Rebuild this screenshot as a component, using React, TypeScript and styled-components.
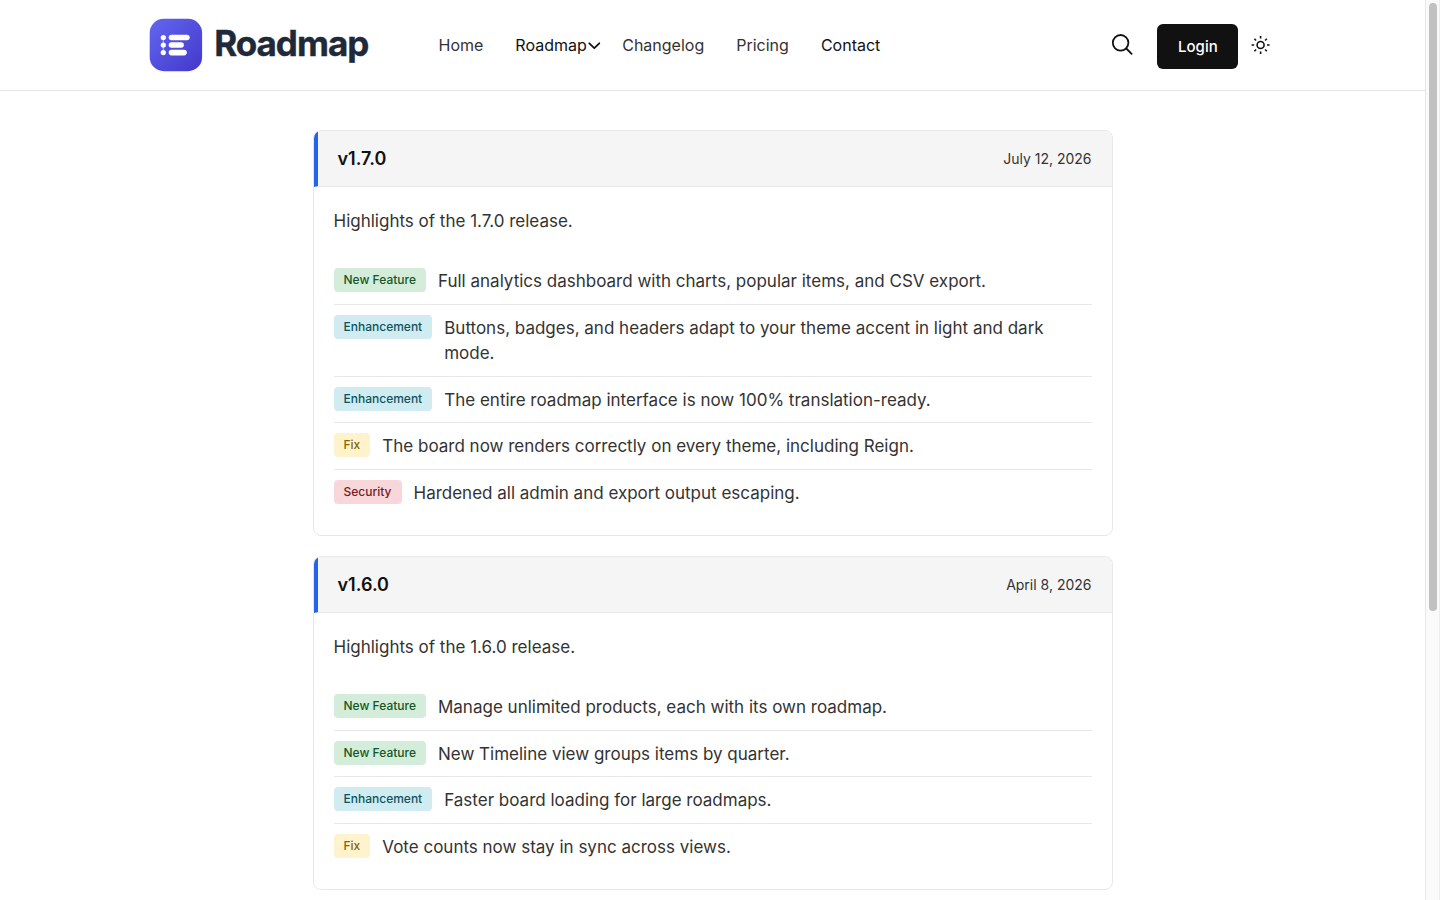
import React from "react";
import styled, { createGlobalStyle } from "styled-components";

const GlobalStyle = createGlobalStyle`
  *, *::before, *::after { box-sizing: border-box; }
  body {
    margin: 0;
    height: 900px;
    overflow: hidden;
    background: #fff;
    color: #333;
    font-family: Inter, "Liberation Sans", sans-serif;
    font-size: 17px;
    line-height: 1.5;
    -webkit-font-smoothing: antialiased;
  }
  h2, p, ul { margin: 0; padding: 0; }
  a { color: inherit; text-decoration: none; }
`;

const Shell = styled.div`
  display: flex;
  height: 900px;
  overflow: hidden;
`;

const Page = styled.div`
  flex: 1;
  min-width: 0;
`;

const ScrollTrack = styled.div`
  width: 15px;
  height: 900px;
  padding: 3px 2px 0 3px;
  background: #fafafa;
  border-left: 1px solid #e8e8e8;
  border-right: 1px solid #ededed;
`;

const ScrollThumb = styled.div`
  width: 8px;
  height: 608px;
  border-radius: 4px;
  background: #c1c1c1;
`;

const Header = styled.header`
  display: flex;
  align-items: center;
  height: 91px;
  padding: 0 154.6px 1px 149px;
  border-bottom: 1px solid #e8e8ec;
`;

const Brand = styled.a`
  display: flex;
  align-items: center;
  width: 289.5px;
  gap: 11.2px;
`;

const BrandName = styled.span`
  color: #1f2937;
  font-size: 35px;
  font-weight: 700;
  line-height: 44px;
  letter-spacing: -1px;
  -webkit-text-stroke: 0.4px #1f2937;
  margin-top: -4px;
`;

const Nav = styled.nav`
  display: flex;
  align-items: center;
  flex: 1;
  font-size: 16px;
  line-height: 24px;
`;

const NavLink = styled.a<{ $strong?: boolean; $gap?: number }>`
  display: flex;
  align-items: center;
  margin-right: ${(p) => p.$gap ?? 32}px;
  color: ${(p) => (p.$strong ? "#111" : "#333")};
  white-space: nowrap;
`;

const Actions = styled.div`
  display: flex;
  align-items: center;
`;

const LoginButton = styled.button`
  width: 81px;
  height: 45px;
  margin: 4px 12px 0 24px;
  padding: 1px 0 0;
  border: 0;
  border-radius: 6px;
  background: #111;
  color: #fff;
  font: 500 15px/24px Inter, sans-serif;
`;

const Releases = styled.main`
  display: flex;
  flex-direction: column;
  gap: 20px;
  width: 800px;
  margin: 39px auto 0;
`;

const Card = styled.article`
  border: 1px solid #e8e8e8;
  border-radius: 8px;
  overflow: hidden;
`;

const CardHeader = styled.div`
  display: flex;
  align-items: center;
  justify-content: space-between;
  height: 56px;
  padding: 0 20px;
  border-left: 4px solid #2563eb;
  border-bottom: 1px solid #e8e8e8;
  background: #f5f5f5;
`;

const Version = styled.h2`
  color: #111;
  font-size: 18px;
  font-weight: 600;
  line-height: 27px;
`;

const ReleaseDate = styled.time`
  font-size: 14px;
  line-height: 21px;
`;

const CardBody = styled.div`
  padding: 20px;
`;

const Summary = styled.p`
  line-height: 28px;
  margin-bottom: 23px;
`;

const Changes = styled.ul`
  list-style: none;
`;

const Change = styled.li`
  display: flex;
  align-items: flex-start;
  gap: 12px;
  padding: 10px 0;
  border-bottom: 1px solid #e8e8e8;
  &:last-child { border-bottom: 0; }
`;

const ChangeText = styled.span`
  margin: 1px 0 -1px;
`;

const tones = {
  "New Feature": ["#d4edda", "#155724"],
  Enhancement: ["#d1ecf1", "#0c5460"],
  Fix: ["#fff3cd", "#856404"],
  Security: ["#f8d7da", "#721c24"],
} as const;
type Kind = keyof typeof tones;

const Badge = styled.span<{ $kind: Kind }>`
  flex: none;
  padding: 3px 10px;
  border-radius: 4px;
  background: ${(p) => tones[p.$kind][0]};
  color: ${(p) => tones[p.$kind][1]};
  font-size: 12px;
  font-weight: 500;
  line-height: 18px;
`;

const releases: { version: string; date: string; changes: [Kind, string][] }[] = [
  {
    version: "1.7.0",
    date: "July 12, 2026",
    changes: [
      ["New Feature", "Full analytics dashboard with charts, popular items, and CSV export."],
      ["Enhancement", "Buttons, badges, and headers adapt to your theme accent in light and dark mode."],
      ["Enhancement", "The entire roadmap interface is now 100% translation-ready."],
      ["Fix", "The board now renders correctly on every theme, including Reign."],
      ["Security", "Hardened all admin and export output escaping."],
    ],
  },
  {
    version: "1.6.0",
    date: "April 8, 2026",
    changes: [
      ["New Feature", "Manage unlimited products, each with its own roadmap."],
      ["New Feature", "New Timeline view groups items by quarter."],
      ["Enhancement", "Faster board loading for large roadmaps."],
      ["Fix", "Vote counts now stay in sync across views."],
    ],
  },
];

const Logo = () => (
  <svg width="54" height="54" viewBox="0 0 54 54">
    <defs>
      <linearGradient id="brand" x1="0" y1="0" x2="1" y2="1">
        <stop offset="0" stopColor="#6366f1" />
        <stop offset="1" stopColor="#4338ca" />
      </linearGradient>
    </defs>
    <rect x="0.7" y="0.8" width="52.4" height="52.4" rx="14" fill="url(#brand)" />
    <path d="M14.3 20v15" stroke="#fff" strokeOpacity="0.5" strokeWidth="1.2" />
    <g fill="#fff">
      <circle cx="14.3" cy="19.5" r="2.6" />
      <circle cx="14.3" cy="27" r="2.6" />
      <circle cx="14.3" cy="34.6" r="2.6" />
      <rect x="19.7" y="16.7" width="21" height="5.6" rx="2.8" />
      <rect x="19.7" y="24.2" width="15.2" height="5.6" rx="2.8" />
      <rect x="19.7" y="31.8" width="18.1" height="5.6" rx="2.8" />
    </g>
  </svg>
);

const Chevron = () => (
  <svg width="14" height="14" viewBox="0 0 14 14" fill="none" stroke="#111" strokeWidth="1.8" strokeLinecap="round" strokeLinejoin="round">
    <path d="M2.3 5.3 7.3 10.1 12.3 5.3" />
  </svg>
);

const SearchIcon = () => (
  <svg width="22" height="22" viewBox="0 0 22 22" fill="none" stroke="#111" strokeWidth="1.8" strokeLinecap="round">
    <circle cx="9.6" cy="8.8" r="7.8" />
    <path d="m15.3 14.5 5.3 5.3" />
  </svg>
);

const SunIcon = () => (
  <svg width="20" height="20" viewBox="0 0 20 20" fill="none" stroke="#111" strokeWidth="1.6">
    <circle cx="10.6" cy="10" r="3.5" />
    <path d="M10.6 1v2.6M10.6 16.4V19M1.6 10h2.6M17 10h2.6M4.4 3.8l1.7 1.7M15.1 14.5l1.7 1.7M4.4 16.2l1.7-1.7M15.1 5.5l1.7-1.7" />
  </svg>
);

export default function App() {
  return (
    <Shell>
      <GlobalStyle />
      <Page>
        <Header>
          <Brand href="#">
            <Logo />
            <BrandName>Roadmap</BrandName>
          </Brand>
          <Nav>
            <NavLink href="#">Home</NavLink>
            <NavLink href="#" $strong $gap={21.5}>Roadmap<Chevron /></NavLink>
            <NavLink href="#">Changelog</NavLink>
            <NavLink href="#">Pricing</NavLink>
            <NavLink href="#" $strong>Contact</NavLink>
          </Nav>
          <Actions>
            <SearchIcon />
            <LoginButton>Login</LoginButton>
            <SunIcon />
          </Actions>
        </Header>
        <Releases>
          {releases.map((r) => (
            <Card key={r.version}>
              <CardHeader>
                <Version>v{r.version}</Version>
                <ReleaseDate>{r.date}</ReleaseDate>
              </CardHeader>
              <CardBody>
                <Summary>Highlights of the {r.version} release.</Summary>
                <Changes>
                  {r.changes.map(([kind, text]) => (
                    <Change key={text}>
                      <Badge $kind={kind}>{kind}</Badge>
                      <ChangeText>{text}</ChangeText>
                    </Change>
                  ))}
                </Changes>
              </CardBody>
            </Card>
          ))}
        </Releases>
      </Page>
      <ScrollTrack>
        <ScrollThumb />
      </ScrollTrack>
    </Shell>
  );
}
